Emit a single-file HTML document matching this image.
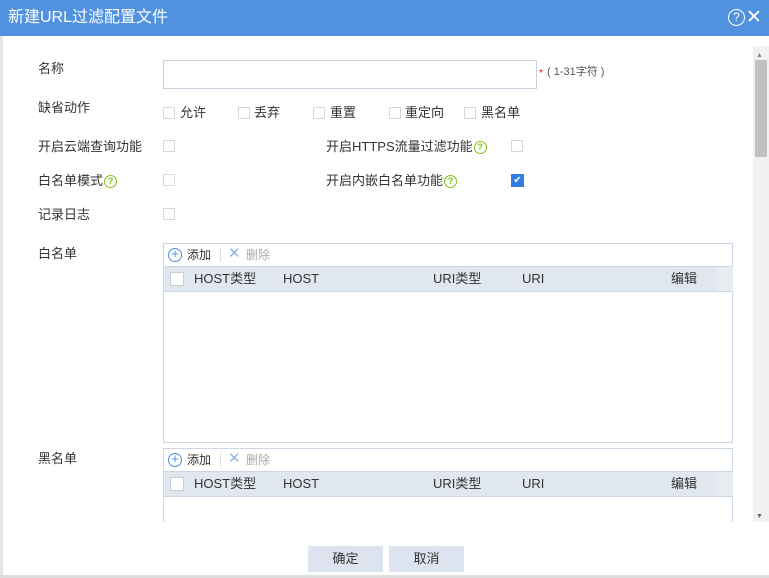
<!DOCTYPE html><html><head><meta charset="utf-8"><style>
*{margin:0;padding:0;box-sizing:border-box}
body{width:769px;height:578px;background:#fff;font-family:"Liberation Sans","Noto Sans CJK SC",sans-serif;font-size:13px;line-height:16px;color:#333;position:relative;overflow:hidden}
.a{position:absolute;white-space:nowrap;line-height:16px}
.cb{position:absolute;width:12px;height:12px;border:1px solid #d8d8d8;background:#fff}
.q{display:inline-block;width:13px;height:13px;border:1.5px solid #7cc317;border-radius:50%;color:#7cc317;font-size:9px;line-height:10px;text-align:center;font-weight:bold;vertical-align:top;margin-top:2px;margin-left:1px}
.grid{position:absolute;left:163px;width:570px;border:1px solid #cdd6e6}
.tb{height:23px;position:relative;border-bottom:1px solid #cdd6e6}
.hd{height:25px;background:#e1e7ef;position:relative;border-bottom:1px solid #cdd6e6}
.hd span{position:absolute;top:4px;line-height:16px;white-space:nowrap}
.btn{position:absolute;top:546px;width:75px;height:26px;background:#dde4ef;text-align:center;line-height:26px;font-size:13px}
</style></head><body>
<div class="a" style="left:0;top:0;width:769px;height:36px;background:#5092e0"></div>
<div class="a" style="left:8px;top:8px;color:#fff;font-size:16px;line-height:20px">新建URL过滤配置文件</div>
<div class="a" style="left:728px;top:9px;width:17px;height:17px;border:1.5px solid #fff;border-radius:50%;color:#fff;font-size:12px;text-align:center;line-height:14px">?</div>
<div class="a" style="left:746px;top:8px;color:#fff;font-size:19px;line-height:20px">✕</div>
<div class="a" style="left:0;top:36px;width:3px;height:542px;background:#e4e4e4"></div>
<div class="a" style="left:0;top:575px;width:769px;height:3px;background:#ddd"></div>
<div class="a" style="left:753px;top:46px;width:16px;height:476px;background:#f1f1f1"></div>
<div class="a" style="left:755px;top:60px;width:12px;height:97px;background:#c1c1c1"></div>
<div class="a" style="left:756px;top:48px;font-size:7px;color:#888">▲</div>
<div class="a" style="left:756px;top:509px;font-size:7px;color:#666">▼</div>

<div class="a" style="left:38px;top:61px">名称</div>
<div class="a" style="left:163px;top:60px;width:374px;height:29px;border:1px solid #c5d0e0"></div>
<div class="a" style="left:539px;top:66px;color:red;font-size:10px">*</div>
<div class="a" style="left:547px;top:64px;font-size:11px;color:#555">( 1-31字符 )</div>

<div class="a" style="left:38px;top:100px">缺省动作</div>
<div class="cb" style="left:163px;top:107px"></div><div class="a" style="left:180px;top:105px">允许</div>
<div class="cb" style="left:238px;top:107px"></div><div class="a" style="left:254px;top:105px">丢弃</div>
<div class="cb" style="left:313px;top:107px"></div><div class="a" style="left:330px;top:105px">重置</div>
<div class="cb" style="left:389px;top:107px"></div><div class="a" style="left:405px;top:105px">重定向</div>
<div class="cb" style="left:464px;top:107px"></div><div class="a" style="left:481px;top:105px">黑名单</div>

<div class="a" style="left:38px;top:139px">开启云端查询功能</div>
<div class="cb" style="left:163px;top:140px"></div>
<div class="a" style="left:326px;top:139px">开启HTTPS流量过滤功能<span class="q">?</span></div>
<div class="cb" style="left:511px;top:140px"></div>

<div class="a" style="left:38px;top:173px">白名单模式<span class="q">?</span></div>
<div class="cb" style="left:163px;top:174px"></div>
<div class="a" style="left:326px;top:173px">开启内嵌白名单功能<span class="q">?</span></div>
<div class="a" style="left:511px;top:174px;width:13px;height:13px;background:#2f7de1;color:#fff;font-size:10px;line-height:13px;text-align:center">✔</div>

<div class="a" style="left:38px;top:207px">记录日志</div>
<div class="cb" style="left:163px;top:208px"></div>

<div class="a" style="left:38px;top:246px">白名单</div>
<div class="grid" style="top:243px;height:200px">
<div class="tb"><span class="a" style="left:4px;top:4px;width:14px;height:14px;border:1.5px solid #4a8ee0;border-radius:50%;color:#4a8ee0;font-size:13px;line-height:10px;text-align:center">+</span><span class="a" style="left:23px;top:3px;font-size:12px">添加</span><span class="a" style="left:56px;top:4px;width:1px;height:14px;background:#ddd"></span><span class="a" style="left:64px;top:2px;color:#8fb6e6;font-size:15px">✕</span><span class="a" style="left:82px;top:3px;font-size:12px;color:#aaa">删除</span></div>
<div class="hd"><span style="left:6px;top:5px;width:14px;height:14px;background:#fff;border:1px solid #ccc"></span><span style="left:30px">HOST类型</span><span style="left:119px">HOST</span><span style="left:269px">URI类型</span><span style="left:358px">URI</span><span style="left:507px">编辑</span><span style="left:552px;top:0;width:17px;height:24px;background:#e8ebef"></span></div>
</div>

<div class="a" style="left:38px;top:451px">黑名单</div>
<div class="grid" style="top:448px;height:74px;border-bottom:none">
<div class="tb"><span class="a" style="left:4px;top:4px;width:14px;height:14px;border:1.5px solid #4a8ee0;border-radius:50%;color:#4a8ee0;font-size:13px;line-height:10px;text-align:center">+</span><span class="a" style="left:23px;top:3px;font-size:12px">添加</span><span class="a" style="left:56px;top:4px;width:1px;height:14px;background:#ddd"></span><span class="a" style="left:64px;top:2px;color:#8fb6e6;font-size:15px">✕</span><span class="a" style="left:82px;top:3px;font-size:12px;color:#aaa">删除</span></div>
<div class="hd"><span style="left:6px;top:5px;width:14px;height:14px;background:#fff;border:1px solid #ccc"></span><span style="left:30px">HOST类型</span><span style="left:119px">HOST</span><span style="left:269px">URI类型</span><span style="left:358px">URI</span><span style="left:507px">编辑</span><span style="left:552px;top:0;width:17px;height:24px;background:#e8ebef"></span></div>
</div>

<div class="btn" style="left:308px">确定</div>
<div class="btn" style="left:389px">取消</div>
</body></html>
